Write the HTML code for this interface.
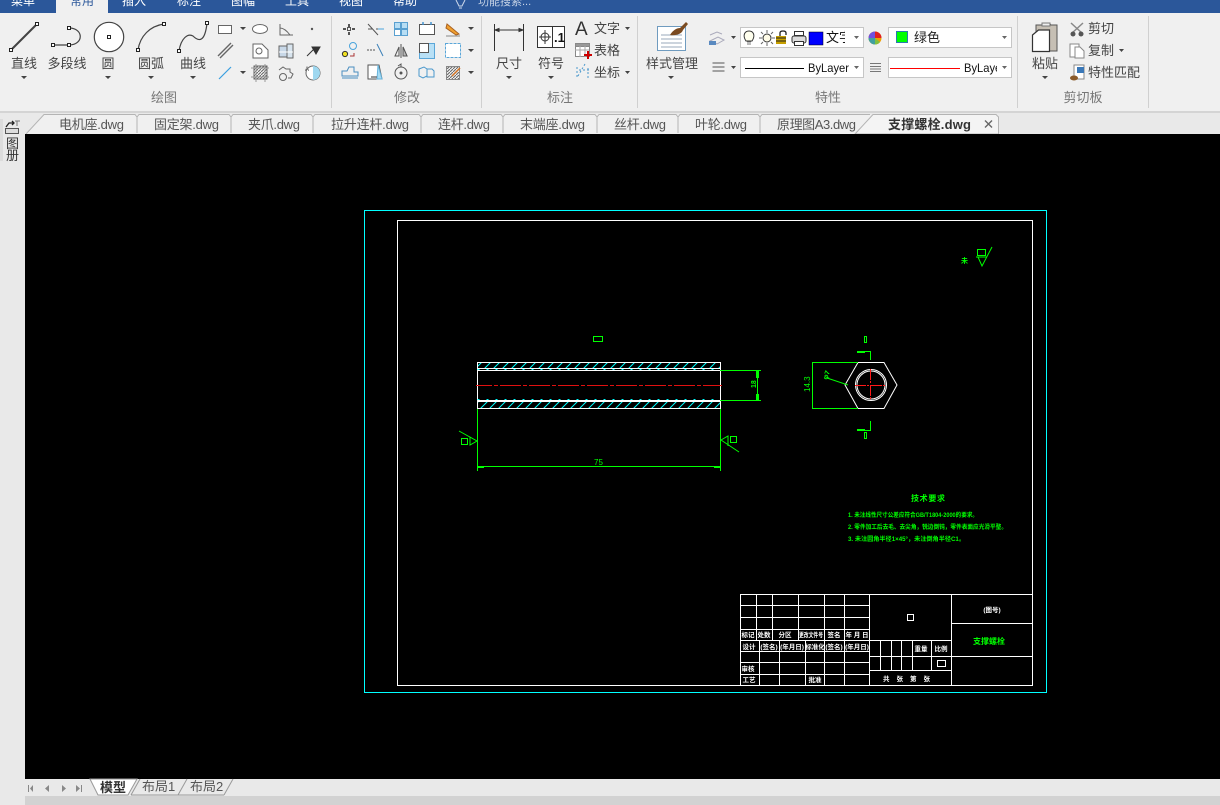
<!DOCTYPE html>
<html><head><meta charset="utf-8"><style>
html,body{margin:0;padding:0;width:1220px;height:805px;overflow:hidden;background:#f0f0f0}
svg{display:block;position:absolute;left:0;top:0}
text{font-family:"Liberation Sans","Noto Sans CJK SC",sans-serif;fill:#444;font-size:13px}
.m{text-anchor:middle}.g{fill:#777}.w{fill:#fff;font-size:12px}
.c{shape-rendering:crispEdges}
.d text{fill:#00ff00;font-size:7px;font-weight:bold}
.t text{fill:#fff;font-size:6.500px;font-weight:bold;text-anchor:middle}
</style></head><body>
<svg width="1220" height="805" viewBox="0 0 1220 805">
<defs>
<pattern id="h" width="9" height="9" patternUnits="userSpaceOnUse"><path d="M-1 8L8-1M-1 17L17-1" stroke="#00ffff" stroke-width="1" fill="none"/></pattern>
<pattern id="hb" width="3" height="3" patternUnits="userSpaceOnUse"><path d="M0 3L3 0" stroke="#666" stroke-width="1"/></pattern>
</defs>
<!-- title bar -->
<rect width="1220" height="13" fill="#2b579a"/>
<rect x="56" y="0" width="52" height="14" fill="#f0f0f0"/>
<g class="w">
<text class="w" x="11" y="5">菜单</text><text x="70" y="5" style="fill:#2b579a;font-size:12px">常用</text>
<text class="w" x="122" y="5">插入</text><text class="w" x="177" y="5">标注</text><text class="w" x="231" y="5">图幅</text><text class="w" x="285" y="5">工具</text><text class="w" x="339" y="5">视图</text><text class="w" x="393" y="5">帮助</text>
<path d="M456 0l3 6h3l3-6M459 8h3" stroke="#ccd8ea" fill="none"/>
<text x="478" y="5" style="fill:#c6d3e6;font-size:11px">功能搜索...</text>
</g>
<!-- ribbon -->
<rect y="13" width="1220" height="98" fill="#f0f0f0"/>
<rect y="111" width="1220" height="2" fill="#d4d4d4"/>
<g class="c" fill="#d0d0d0"><rect x="331" y="16" width="1" height="92"/><rect x="481" y="16" width="1" height="92"/><rect x="637" y="16" width="1" height="92"/><rect x="1017" y="16" width="1" height="92"/><rect x="1148" y="16" width="1" height="92"/></g>

<!-- draw group -->
<g fill="none" stroke="#444">
<path d="M11 50L37 24" stroke-width="2"/>
<rect x="9.500" y="48.500" width="3" height="3" fill="#fff" stroke="#222"/><rect x="35.500" y="22.500" width="3" height="3" fill="#fff" stroke="#222"/>
<path d="M53 45H69C84 45 84 28 69 28" stroke-width="1.200"/>
<rect x="51.500" y="43.500" width="3" height="3" fill="#fff" stroke="#222"/><rect x="67.500" y="43.500" width="3" height="3" fill="#fff" stroke="#222"/><rect x="67.500" y="26.500" width="3" height="3" fill="#fff" stroke="#222"/>
<circle cx="109" cy="37" r="14.700" fill="#fff" stroke-width="1.200"/><rect x="107.500" y="35.500" width="3" height="3" fill="#fff" stroke="#222"/>
<path d="M138 50C140 36 150 26 164 24" stroke-width="1.200"/>
<rect x="136.500" y="48.500" width="3" height="3" fill="#fff" stroke="#222"/><rect x="162.500" y="22.500" width="3" height="3" fill="#fff" stroke="#222"/>
<path d="M179 51C181 38 188 33 193 36C199 42 205 42 207 23" stroke-width="1.200"/>
<rect x="177.500" y="49.500" width="3" height="3" fill="#fff" stroke="#222"/><rect x="205.500" y="21.500" width="3" height="3" fill="#fff" stroke="#222"/>
</g>
<g><text class="m" x="24" y="68">直线</text><text class="m" x="67" y="68">多段线</text><text class="m" x="108" y="68">圆</text><text class="m" x="151" y="68">圆弧</text><text class="m" x="193" y="68">曲线</text></g>
<g fill="#444"><path d="M21 76h6l-3 3zM105 76h6l-3 3zM148 76h6l-3 3zM190 76h6l-3 3zM240 27h6l-3 3zM240 71h6l-3 3zM468 27h6l-3 3zM468 49h6l-3 3zM468 71h6l-3 3zM506 76h6l-3 3zM548 76h6l-3 3zM625 27h5l-2.500 3zM625 71h5l-2.500 3zM668 76h6l-3 3zM731 36h5l-2.500 3zM731 66h5l-2.500 3zM1042 76h6l-3 3zM1119 49h5l-2.500 3z"/></g>
<g fill="none" stroke="#666">
<rect x="218.500" y="25.500" width="13" height="8" fill="#fff"/>
<ellipse cx="260" cy="29" rx="7.500" ry="4.500" fill="#fff"/>
<path d="M280 24V35H293M280 28C284 28 287 31 290 35"/>
<path d="M218 56L231 43M220 58L233 45" stroke-width="1.400"/>
<path d="M253 44H262L268 50V58H253Z" fill="#fff"/><circle cx="259" cy="51" r="3"/>
<rect x="279" y="46" width="8" height="11" fill="#c8d8e8"/><rect x="287" y="44" width="6" height="14" fill="#d8e4ee"/><path d="M279 52H293" stroke="#fff"/>
<path d="M219 79L231 67" stroke="#3a9fe0" stroke-width="1.200"/>
<rect x="254" y="66" width="13" height="13" fill="url(#hb)"/><path d="M251 68h18M251 77h18M256 64v18M265 64v18" stroke="#999"/>
<circle cx="283" cy="77" r="3.500"/><path d="M279 70l4-3 3 2 4 0 0 3 3 2-2 4-3 0" />
<circle cx="313" cy="73" r="7" fill="#fff"/><path d="M313 73V66A7 7 0 0 1 313 80Z" fill="#9fd8f0" stroke="none"/>
</g>
<circle cx="312" cy="29" r="1.200" fill="#555"/>
<path d="M307 56L314 49M312 47L320 47L316 54Z" stroke="#333" fill="#333"/>
<text x="305" y="71" style="font-size:6px">A</text>
<text class="m g" x="164" y="102">绘图</text>

<!-- modify -->
<g fill="none" stroke="#555">
<path d="M349 24v3M349 32v3M343 29h3M352 29h3" stroke-width="2"/><rect x="347.500" y="27.500" width="3" height="3"/>
<path d="M368 24L378 35M368 29H372M376 29H384" /><path d="M378 29h6" stroke="#4aa4dc"/>
<circle cx="353" cy="46" r="3.500" stroke="#4aa4dc"/><circle cx="345" cy="54" r="2.600" fill="#f0e020" stroke="#333"/><path d="M350 56h4v-3" stroke="#a33"/>
<path d="M367 50h8" stroke-dasharray="2 1"/><path d="M377 44L383 56" stroke="#3a7fb8"/>
<path d="M342 76h16v-4h-4v-5h-5l-2 4h-5z" stroke="#4a8ec0"/><path d="M342 78h16" stroke="#4a8ec0"/>
<path d="M368 65h11l3 14h-14z" fill="#fff"/><path d="M378 65l4 14h-5z" fill="#a8dcf4" stroke="#68b4dc"/><path d="M371 77h6" stroke="#333"/>
<rect x="394.500" y="22.500" width="6" height="6" fill="#b8def4" stroke="#5aa0d0"/><rect x="401.500" y="22.500" width="6" height="6" fill="#b8def4" stroke="#5aa0d0"/><rect x="394.500" y="29.500" width="6" height="6" fill="#fff" stroke="#5aa0d0"/><rect x="401.500" y="29.500" width="6" height="6" fill="#b8def4" stroke="#5aa0d0"/>
<path d="M401 44V58M399 47L395 56H399ZM403 47L407 56H403Z" /><path d="M403 47L407 56H403Z" fill="#bbb"/>
<circle cx="401" cy="73" r="6"/><circle cx="401" cy="73" r="1" fill="#555"/><path d="M398 66l3-2v3" />
<rect x="419.500" y="24.500" width="15" height="10" fill="#fff"/><path d="M423 22v3M431 22v3" stroke="#3a8ecf" stroke-width="1.400"/>
<rect x="419.500" y="43.500" width="15" height="15" fill="#b8e0f6" stroke="#5aa6d8"/><rect x="419.500" y="43.500" width="9" height="9" fill="#fff" stroke="#555"/>
<path d="M419 69l5-2 3 2v7l-4 2-4-2zM427 69l5 0 2 2v6h-7z" stroke="#4a98cc"/>
<path d="M447 24l12 10-3 1-10-7z" fill="#f0a030" stroke="#a86020"/><path d="M446 36h14" stroke="#888"/>
<rect x="445.500" y="43.500" width="15" height="14" fill="#fff" stroke="#5aa6d8" stroke-dasharray="3 1"/>
<rect x="446.500" y="66.500" width="13" height="13" fill="url(#hb)" stroke="#888"/><path d="M452 76l8-8" stroke="#d07020" stroke-width="1.500"/>
</g>
<text class="m g" x="407" y="102">修改</text>

<!-- annotate -->
<g fill="none" stroke="#333"><path d="M494.500 24V51M523.500 24V51M495 30H523"/><path d="M495 30l4-1.500v3zM523 30l-4-1.500v3z" fill="#333"/>
<rect x="537.500" y="26.500" width="27" height="21" fill="#fff"/><path d="M552.500 26.500V47.500M539 37H551M545 30V44"/><circle cx="545" cy="37" r="4"/></g>
<text x="554" y="42" style="font-size:13px;font-weight:bold;fill:#111">.1</text>
<text class="m" x="509" y="68">尺寸</text><text class="m" x="551" y="68">符号</text>
<text x="575" y="35" style="font-size:19px;fill:#333">A</text>
<text x="594" y="33">文字</text><text x="594" y="55">表格</text><text x="594" y="77">坐标</text>
<g fill="none"><rect x="575.500" y="43.500" width="14" height="13" fill="#fff" stroke="#888"/><rect x="575.500" y="43.500" width="14" height="3" fill="#999" stroke="#888"/><path d="M575 50h14M580 46v11M585 46v11" stroke="#aaa"/><path d="M584 55h8M588 51v8" stroke="#c00" stroke-width="2"/>
<path d="M577 67v12M585 64l-7 12M579 70h10M588 68v10" stroke="#4a98cc" stroke-dasharray="2 2"/></g>
<text class="m g" x="560" y="102">标注</text>

<!-- style manager -->
<rect x="657.500" y="26.500" width="28" height="24" fill="#fff" stroke="#6f9bbf"/>
<path d="M661 35h21M661 39h21M661 43h21M661 47h21" stroke="#9ab"/>
<path d="M670 35C673 30 677 28 680 28L686 22L688 24L683 30C682 34 675 36 670 35Z" fill="#7a4a20"/>
<text class="m" x="672" y="68">样式管理</text>
<path d="M710 41l8-4 6 3-7 4zM710 35l7-3 5 2" fill="none" stroke="#aab"/><rect x="709" y="41" width="7" height="4" fill="#5a8ac0"/>
<path d="M712.500 63h12M712.500 67h12M712.500 71h12" stroke="#555" stroke-width="1"/>
<g class="c" fill="#fff" stroke="#c6c6c6"><rect x="740.500" y="27.500" width="123" height="20"/><rect x="888.500" y="27.500" width="123" height="20"/><rect x="740.500" y="57.500" width="123" height="20"/><rect x="888.500" y="57.500" width="123" height="20"/></g>
<g fill="#666"><path d="M854 36h5l-2.500 3zM1002 36h5l-2.500 3zM854 66h5l-2.500 3zM1002 66h5l-2.500 3z"/></g>
<path d="M747 44h4M747 42h4" stroke="#777"/><path d="M746 41C742 35 745 31 749 31C753 31 756 35 752 41Z" fill="#ffe" stroke="#333"/>
<circle cx="767" cy="38" r="4" fill="#fffce8" stroke="#333"/><path d="M767 30v3M767 43v3M759 38h3M772 38h3M761 32l2 2M771 42l2 2M761 44l2-2M771 34l2-2" stroke="#666"/>
<path d="M776 36h10v8h-10z" fill="#c8a000"/><path d="M776 38h10M776 41h10" stroke="#222"/><path d="M780 36v-3q0-2 3-2t3 2v2" fill="none" stroke="#222" stroke-width="1.300"/>
<rect x="792" y="36" width="14" height="7" rx="2" fill="#ddd" stroke="#333"/><rect x="794.500" y="31.500" width="9" height="4" fill="#fff" stroke="#333"/><rect x="794.500" y="41.500" width="9" height="4" fill="#fff" stroke="#333"/>
<rect x="809" y="32" width="14" height="13" fill="#0000ff" stroke="#000" stroke-width=".5"/>
<svg x="826" y="27" width="19" height="20"><text x="0" y="15" style="fill:#111">文字</text></svg>
<circle cx="875" cy="38" r="6.500" fill="#f0a000"/><path d="M875 38V31.500A6.500 6.500 0 0 1 881.500 38Z" fill="#e02020"/><path d="M875 38V31.500A6.500 6.500 0 0 0 868.500 38Z" fill="#7050e0"/><path d="M875 38L868.500 38A6.500 6.500 0 0 0 875 44.500Z" fill="#40a0a0"/><path d="M875 38V44.500A6.500 6.500 0 0 0 880 42Z" fill="#80c040"/>
<rect x="896.500" y="31.500" width="11" height="11" fill="#00ff00" stroke="#2a7ab0"/>
<text x="914" y="42" style="fill:#222">绿色</text>
<path d="M745 68.500H804" stroke="#000"/><text x="808" y="72" textLength="41" lengthAdjust="spacingAndGlyphs" style="fill:#111;font-size:12px">ByLayer</text>
<path d="M870 63.500h11M870 66.500h11M870 69h11M870 71.500h11" stroke="#777"/>
<path d="M890 68.500H960" stroke="#f00"/>
<svg x="964" y="58" width="33" height="20"><text x="0" y="14" textLength="41" lengthAdjust="spacingAndGlyphs" style="fill:#111;font-size:12px">ByLayer</text></svg>
<text class="m g" x="828" y="102">特性</text>

<!-- clipboard -->
<path d="M1036 25h6l2-2h5l2 2h6v26h-21z" fill="#c6bfb4" stroke="#555"/><rect x="1042" y="23" width="8" height="3" fill="#eee" stroke="#777"/>
<path d="M1032.500 35l6-5h11v21.500h-17z" fill="#fff" stroke="#333" stroke-width="1.200"/>
<text class="m" x="1045" y="68">粘贴</text>
<path d="M1071 23l12 11M1083 23l-12 11" stroke="#888" stroke-width="1.500"/><circle cx="1073" cy="34" r="2.500" fill="#555"/><circle cx="1081" cy="34" r="2.500" fill="#555"/>
<text x="1088" y="33">剪切</text><text x="1088" y="55">复制</text><text x="1088" y="77">特性匹配</text>
<rect x="1070" y="44" width="9" height="13" fill="#fff" stroke="#888"/><path d="M1075 47h5l4 4v7h-9z" fill="#fff" stroke="#888"/>
<rect x="1074" y="65" width="10" height="14" fill="#fff" stroke="#888"/><rect x="1077" y="67" width="7" height="6" fill="#3a78b8"/><ellipse cx="1074" cy="78" rx="4" ry="2.500" fill="#8a5a2a"/>
<text class="m g" x="1083" y="102">剪切板</text>

<!-- tab strip -->
<rect y="113" width="1220" height="21" fill="#e9e9e9"/>
<path d="M26 134L44 115H998V134Z" fill="#f0f0f0"/>
<g fill="none" stroke="#b4b4b4" class="tabs">
<path d="M26 134L44 114.500H135L137 117V133M137 117L139 114.500H229L231 117V133M231 117L233 114.500H311L313 117V133M313 117L315 114.500H419L421 117V133M421 117L423 114.500H501L503 117V133M503 117L505 114.500H595L597 117V133M597 117L599 114.500H676L678 117V133M678 117L680 114.500H758L760 117V133M760 117L762 114.500H870"/>
</g>
<path d="M855 134L873 114.500H996L998.500 117V134Z" fill="#f4f4f4" stroke="#b4b4b4"/>
<g>
<text x="59" y="129" textLength="65" style="fill:#555">电机座.dwg</text><text x="154" y="129" textLength="65" style="fill:#555">固定架.dwg</text><text x="248" y="129" textLength="52" style="fill:#555">夹爪.dwg</text><text x="331" y="129" textLength="78" style="fill:#555">拉升连杆.dwg</text><text x="438" y="129" textLength="52" style="fill:#555">连杆.dwg</text><text x="520" y="129" textLength="65" style="fill:#555">末端座.dwg</text><text x="614" y="129" textLength="52" style="fill:#555">丝杆.dwg</text><text x="695" y="129" textLength="52" style="fill:#555">叶轮.dwg</text><text x="777" y="129" textLength="79" style="fill:#555">原理图A3.dwg</text>
<text x="888" y="129" textLength="83" style="fill:#333;font-weight:bold">支撑螺栓.dwg</text>
</g>
<path d="M985 120.500l7 7M992 120.500l-7 7" stroke="#666" stroke-width="1.400"/>

<!-- left panel -->
<rect y="134" width="25" height="671" fill="#e9e9e9"/>
<rect x="0" y="119" width="3" height="42" fill="#dcdcdc"/>
<path d="M6 127l3-4h5M12 121l2 2-2 2" fill="none" stroke="#222" stroke-width="1.300"/><path d="M15 121h5M17 121v5" stroke="#777"/><rect x="5.500" y="128.500" width="13" height="5" fill="#ddd" stroke="#555"/>
<text x="6" y="148" style="font-size:13px;fill:#333">图</text><text x="6" y="160" style="font-size:13px;fill:#333">册</text>

<!-- canvas -->
<rect x="25" y="134" width="1195" height="645" fill="#000"/>
<g class="c" fill="none">
<rect x="364.500" y="210.500" width="682" height="482" stroke="#00ffff"/>
<rect x="397.500" y="220.500" width="635" height="465" stroke="#fff"/>
<!-- shaft -->
<rect x="478" y="363" width="242" height="6" fill="url(#h)"/>
<rect x="478" y="402" width="242" height="6" fill="url(#h)"/>
<path d="M477.500 362.500H720.500M477.500 368.500H720.500M477.500 401.500H720.500M477.500 408.500H720.500M477.500 362V409M720.500 362V409" stroke="#fff"/>
<path d="M477.500 370.500H720.500M477.500 400.500H720.500" stroke="#fff"/>
<path d="M477.500 369.500H720.500M477.500 399.500H720.500" stroke="#00ffff" stroke-dasharray="2 7"/>
<path d="M476 385.500H722" stroke="#e01010" stroke-dasharray="21 2 4 2" stroke-dashoffset="5"/>
<path d="M720 370.500H761M720 400.500H761M757.500 370V401M477.500 409V471M720.500 409V471M477 466.500H721" stroke="#00ff00"/>
<path d="M756.500 371v7M756.500 394v7M758.500 371v7M758.500 394v7M478 467.500h6M714 467.500h6" stroke="#00ff00"/>
<rect x="593.500" y="336.500" width="9" height="5" stroke="#00ff00"/>
<rect x="461.500" y="438.500" width="6" height="6" stroke="#00ff00"/>
<rect x="730.500" y="436.500" width="6" height="6" stroke="#00ff00"/>
</g>
<g fill="none" stroke="#00ff00">
<path d="M459 431L477 441L470 445V437M470 437L477 441"/>
<path d="M721 440L739 452M721 440L728 436V446"/>
</g>
<g class="d"><text x="594" y="465" style="font-size:8px;font-weight:normal">75</text><text transform="translate(756,388) rotate(-90)" style="font-size:7px">18</text><text transform="translate(810,392) rotate(-90)" style="font-size:8px;font-weight:normal">14.3</text><text transform="translate(827,380) rotate(-70)" style="font-size:7px">φ7</text></g>
<!-- hex view -->
<g fill="none">
<path d="M858 362.500H884L897 385L884 408.500H858L845 385Z" stroke="#fff"/>
<circle cx="871" cy="385" r="15.500" stroke="#fff"/><circle cx="871" cy="385" r="14" stroke="#fff"/>
<path d="M855 385.500H887M870.500 369V401" stroke="#ff1818" stroke-dasharray="11 1 2 2" stroke-width="1"/>
<path class="c" d="M812 362.500H858M812 408.500H858M812.500 362V409" stroke="#00ff00"/>
<path class="c" d="M857 351.500H870.500V360M857 430.500H870.500V421" stroke="#00ff00"/>
<path class="c" d="M857 352.500H865M857 429.500H865" stroke="#00ff00"/>
<rect class="c" x="864.500" y="336.500" width="2" height="6" stroke="#00ff00"/>
<rect class="c" x="864.500" y="432.500" width="2" height="6" stroke="#00ff00"/>
<path d="M827 378L848 385" stroke="#00ff00"/>
</g>
<!-- roughness -->
<g fill="none" stroke="#00ff00">
<rect class="c" x="977.500" y="249.500" width="8" height="6"/>
<path class="c" d="M976 257h11"/>
<path d="M978 257L982 266L992 247"/>
</g>
<g class="d"><text x="961" y="263" style="font-size:7px">未</text></g>
<!-- title block -->
<g class="c" stroke="#fff" fill="none">
<path d="M740.500 594.500H1032M740.500 605.500H869.500M740.500 617.500H869.500M740.500 629.500H869.500M740.500 640.500H951.500M740.500 651.500H869.500M740.500 662.500H869.500M740.500 674.500H869.500"/>
<path d="M740.500 594V686M756.500 594V640M772.500 594V640M798.500 594V640M824.500 594V686M844.500 594V686M869.500 594V686M951.500 594V686"/>
<path d="M759.500 640V686M779.500 640V686M805.500 640V686"/>
<path d="M869.500 656.500H951.500M869.500 670.500H951.500M880.500 640V670M891.500 640V670M901.500 640V670M912.500 640V670M931.500 640V670"/>
<path d="M951.500 623.500H1032M951.500 656.500H1032"/>
<rect x="907.500" y="614.500" width="6" height="6"/>
<rect x="937.500" y="660.500" width="8" height="6"/>
</g>
<g class="t">
<text x="748" y="637">标记</text><text x="764" y="637">处数</text><text x="785" y="637">分区</text><text x="811" y="637" textLength="24" lengthAdjust="spacingAndGlyphs">更改文件号</text><text x="834" y="637">签名</text><text x="857" y="637">年 月 日</text>
<text x="749" y="649">设计</text><text x="769" y="649">(签名)</text><text x="792" y="649">(年月日)</text><text x="815" y="649">标准化</text><text x="834" y="649">(签名)</text><text x="857" y="649">(年月日)</text>
<text x="748" y="671">审核</text><text x="749" y="682">工艺</text><text x="815" y="682">批准</text>
<text x="921" y="651">重量</text><text x="941" y="651">比例</text>
<text x="910" y="681" style="word-spacing:7px;letter-spacing:7px">共张第张</text>
<text x="992" y="612">(图号)</text>
</g>
<text class="m" x="989" y="644" style="fill:#00ff00;font-size:8px;font-weight:bold">支撑螺栓</text>
<!-- tech text -->
<g class="d">
<text x="911" y="501" textLength="34" style="font-size:8px">技术要求</text>
<text x="848" y="517" textLength="130" lengthAdjust="spacingAndGlyphs" style="font-size:6px">1. 未注线性尺寸公差应符合GB/T1804-2000的要求。</text>
<text x="848" y="529" textLength="159" lengthAdjust="spacingAndGlyphs" style="font-size:6px">2. 零件加工后去毛、去尖角，锐边倒钝，零件表面应光滑平整。</text>
<text x="848" y="541" textLength="117" lengthAdjust="spacingAndGlyphs" style="font-size:6px">3. 未注圆角半径1×45°，未注倒角半径C1。</text>
</g>

<!-- bottom bar -->
<rect x="25" y="779" width="1195" height="17" fill="#e9e9e9"/>
<rect x="25" y="796" width="1195" height="9" fill="#d2d2d2"/>
<g fill="#888"><path d="M28 785h1v7h-1zM33 785v7l-3-3.500zM49 785v7l-4-3.500zM62 785v7l4-3.500zM76 785v7l4-3.500zM81 785h1v7h-1z"/></g>
<path d="M90 779L98 795H128L137 779Z" fill="#fff" stroke="#999"/>
<path d="M131 795L140 779M178 795L187 779M224 795L233 779M131 795H178M178 795H224" fill="none" stroke="#999"/>
<text x="100" y="792" style="fill:#333;font-weight:bold">模型</text>
<text x="142" y="791" style="fill:#555">布局1</text><text x="190" y="791" style="fill:#555">布局2</text>
</svg>
</body></html>
